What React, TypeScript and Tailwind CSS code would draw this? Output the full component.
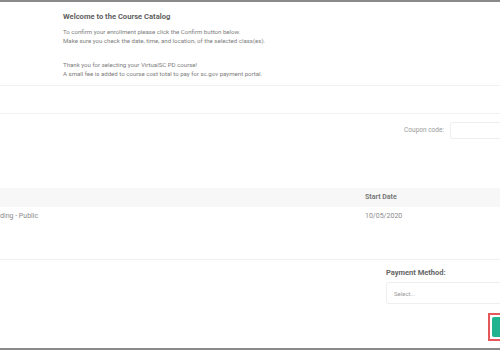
import React from 'react';

const App: React.FC = () => {
  return (
    <div
      className="w-[500px] h-[350px] overflow-hidden bg-white border-t-2 border-b-2 border-[#8a8a8a] flex flex-col"
      style={{ fontFamily: 'Roboto, "Liberation Sans", sans-serif' }}
    >
      {/* intro */}
      <div className="h-[84px] shrink-0 border-b border-[#f1f1f1] pl-[63px] pt-[9px]">
        <h1 className="text-[7.6px] font-bold text-[#5f5f5f] leading-[12px]">Welcome to the Course Catalog</h1>
        <p className="mt-[4px] text-[6.1px] text-[#7d7d7d] leading-[9px]">
          To confirm your enrollment please click the Confirm button below.
          <br />
          Make sure you check the date, time, and location, of the selected class(es).
        </p>
        <p className="mt-[15px] text-[6.1px] text-[#7d7d7d] leading-[9px]">
          Thank you for selecting your VirtualSC PD course!
          <br />
          A small fee is added to course cost total to pay for sc.gov payment portal.
        </p>
      </div>

      {/* empty band */}
      <div className="h-[28px] shrink-0 border-b border-[#f1f1f1]" />

      {/* coupon */}
      <div className="h-[74px] shrink-0 flex justify-end items-start pt-[8px]">
        <div className="flex items-center gap-[6px] -mr-[12px]">
          <span className="text-[6.5px] text-[#999]">Coupon code:</span>
          <div className="w-[62px] h-[17px] border border-[#eeeeee] rounded-[2px]" />
        </div>
      </div>

      {/* table */}
      <div className="h-[19px] shrink-0 bg-[#f7f7f7] flex items-center">
        <span className="ml-[365px] text-[7px] font-bold text-[#777]">Start Date</span>
      </div>
      <div className="h-[53px] shrink-0 border-b border-[#f1f1f1] flex items-start pt-[4px]">
        <span className="w-[365px] text-[7px] text-[#8a8a8a]">ding - Public</span>
        <span className="text-[7px] text-[#8a8a8a]">10/05/2020</span>
      </div>

      {/* payment */}
      <div className="flex-1 relative">
        <div className="ml-[386px] mt-[8px] flex flex-col">
          <span className="text-[7.5px] font-bold text-[#666] leading-[10px]">Payment Method:</span>
          <div className="mt-[4px] w-[130px] h-[22px] border border-[#eeeeee] rounded-[2px] flex items-center pl-[7px]">
            <span className="text-[6px] text-[#999]">Select...</span>
          </div>
        </div>
        <div className="absolute left-[488px] top-[53px] w-[20px] h-[28px] border-[2px] border-[#e4585a] p-[2px]">
          <div className="w-full h-full bg-[#1fb48f] rounded-[2px]" />
        </div>
      </div>
    </div>
  );
};

export default App;
